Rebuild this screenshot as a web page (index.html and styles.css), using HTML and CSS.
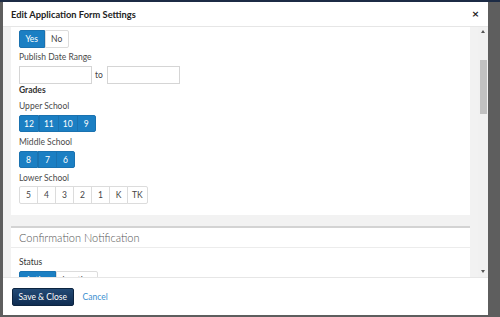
FILE: index.html
```html
<!DOCTYPE html>
<html lang="en">
<head>
  <meta charset="UTF-8">
  <title>Edit Application Form Settings</title>
  <link rel="stylesheet" href="styles.css">
</head>
<body>
  <div class="topbar"></div>

  <div class="modal">
    <!-- Başlık -->
    <div class="modal-header">
      <h3>Edit Application Form Settings</h3>
      <span class="close">&times;</span>
    </div>

    <div class="modal-body">
      <div class="scroll-content">
        <div class="card">
          <div class="btn-group toggle">
            <button class="btn active">Yes</button>
            <button class="btn">No</button>
          </div>

          <label class="label first">Publish Date Range</label>
          <div class="date-range">
            <input type="text">
            <span>to</span>
            <input type="text">
          </div>

          <div class="label bold">Grades</div>

          <div class="label school">Upper School</div>
          <div class="btn-group grades">
            <button class="btn active">12</button>
            <button class="btn active">11</button>
            <button class="btn active">10</button>
            <button class="btn active">9</button>
          </div>

          <div class="label school">Middle School</div>
          <div class="btn-group grades">
            <button class="btn active">8</button>
            <button class="btn active">7</button>
            <button class="btn active">6</button>
          </div>

          <div class="label school">Lower School</div>
          <div class="btn-group grades lower">
            <button class="btn">5</button>
            <button class="btn">4</button>
            <button class="btn">3</button>
            <button class="btn">2</button>
            <button class="btn">1</button>
            <button class="btn">K</button>
            <button class="btn">TK</button>
          </div>
        </div>

        <!-- Onay Bildirimi -->
        <div class="card card-section">
          <div class="card-title">Confirmation Notification</div>
          <div class="card-inner">
            <div class="label status">Status</div>
            <div class="btn-group toggle">
              <button class="btn active">Active</button>
              <button class="btn">Inactive</button>
            </div>
          </div>
        </div>
      </div>

      <!-- Kaydırma Çubuğu -->
      <div class="scrollbar">
        <span class="arrow up"></span>
        <div class="thumb"></div>
        <span class="arrow down"></span>
      </div>
    </div>

    <div class="modal-footer">
      <button class="save-btn">Save &amp; Close</button>
      <a href="#" class="cancel">Cancel</a>
    </div>
  </div>
</body>
</html>
```

FILE: styles.css
```css
body {
    margin: 0;
    background: #5e5e5e;
    font-family: Lato, 'Open Sans', sans-serif;
    color: #333;
    height: 317px;
    overflow: hidden;
}

.topbar {
    height: 2px;
    background: #1c2b45;
}

/* Modal */
.modal {
    margin-left: 3px;
    width: 485px;
    height: 313px;
    background: #fff;
    display: flex;
    flex-direction: column;
}

.modal-header {
    height: 24px;
    flex: none;
    display: flex;
    align-items: center;
    justify-content: space-between;
    padding: 0 9px 0 8px;
    border-bottom: 1px solid #e6e6e6;
}

.modal-header h3 {
    margin: 0;
    font-size: 9.3px;
    font-weight: 700;
    color: #222;
}

.close {
    font-size: 12px;
    font-weight: 700;
    color: #222;
    line-height: 1;
}

.modal-body {
    height: 250px;
    flex: none;
    display: flex;
    background: #f2f2f2;
    border-bottom: 1px solid #e6e6e6;
}

.scroll-content {
    flex: 1;
    padding: 0 8px;
    overflow: hidden;
}

/* Kart */
.card {
    background: #fff;
    padding: 3px 8px 11px;
}

.label {
    display: block;
    font-size: 8.5px;
    line-height: 12px;
    color: #4a4a4a;
}

.label.first {
    margin-top: 3px;
}

.label.bold {
    font-weight: 700;
    color: #333;
}

.label.school {
    margin-top: 4px;
}

.btn-group {
    display: flex;
}

.btn {
    font-family: inherit;
    font-size: 8.5px;
    height: 18px;
    padding: 0 5.5px;
    border: 1px solid #dcdcdc;
    background: #fff;
    color: #444;
    margin: 0 0 0 -1px;
}

.btn:first-child {
    margin-left: 0;
    border-radius: 2px 0 0 2px;
}

.btn:last-child {
    border-radius: 0 2px 2px 0;
}

.btn.active {
    background: #1b7fc3;
    border-color: #1a72b0;
    color: #fff;
}

.btn-group .btn:first-child.active + .btn {
    margin-left: 0;
}

.btn-group.grades {
    margin-top: 3px;
}

.btn-group.grades .btn {
    height: 17px;
    min-width: 19px;
    padding: 0 4px;
}

.btn-group.lower {
    margin-top: 2px;
}

.btn-group.lower .btn {
    height: 18px;
}

.date-range {
    display: flex;
    align-items: center;
    margin-top: 3px;
}

.date-range input {
    width: 73px;
    height: 18px;
    box-sizing: border-box;
    border: 1px solid #d5d5d5;
    padding: 0;
}

.date-range span {
    font-size: 8.5px;
    color: #444;
    margin: 0 4px 0 3px;
}

/* İkinci Kart */
.card-section {
    margin-top: 11px;
    padding: 0;
    border-top: 2px solid #d3d3d3;
}

.card-title {
    font-size: 11px;
    font-weight: 300;
    color: #555;
    line-height: 19px;
    padding: 0 8px;
    border-bottom: 1px solid #ececec;
}

.card-inner {
    padding: 8px 8px 0;
}

.label.status {
    margin-bottom: 3px;
    color: #333;
}

/* Kaydırma Çubuğu */
.scrollbar {
    width: 10px;
    flex: none;
    background: #f1f1f1;
    position: relative;
}

.thumb {
    position: absolute;
    top: 33px;
    left: 2px;
    width: 7px;
    height: 54px;
    background: #c1c1c1;
}

.arrow {
    position: absolute;
    left: 3px;
    width: 0;
    height: 0;
    border-left: 2px solid transparent;
    border-right: 2px solid transparent;
}

.arrow.up {
    top: 3px;
    border-bottom: 3px solid #555;
}

.arrow.down {
    bottom: 4px;
    border-top: 3px solid #555;
}

/* Alt Kısım */
.modal-footer {
    flex: 1;
    display: flex;
    align-items: center;
    padding: 0 9px;
    gap: 9px;
}

.save-btn {
    font-family: inherit;
    font-size: 8.5px;
    color: #fff;
    height: 18px;
    padding: 0 5.5px;
    border: 1px solid #0c2440;
    border-radius: 2px;
    background: linear-gradient(#234a75, #0f2d52);
}

.cancel {
    font-size: 8.5px;
    color: #3a8fd0;
    text-decoration: none;
}
```
